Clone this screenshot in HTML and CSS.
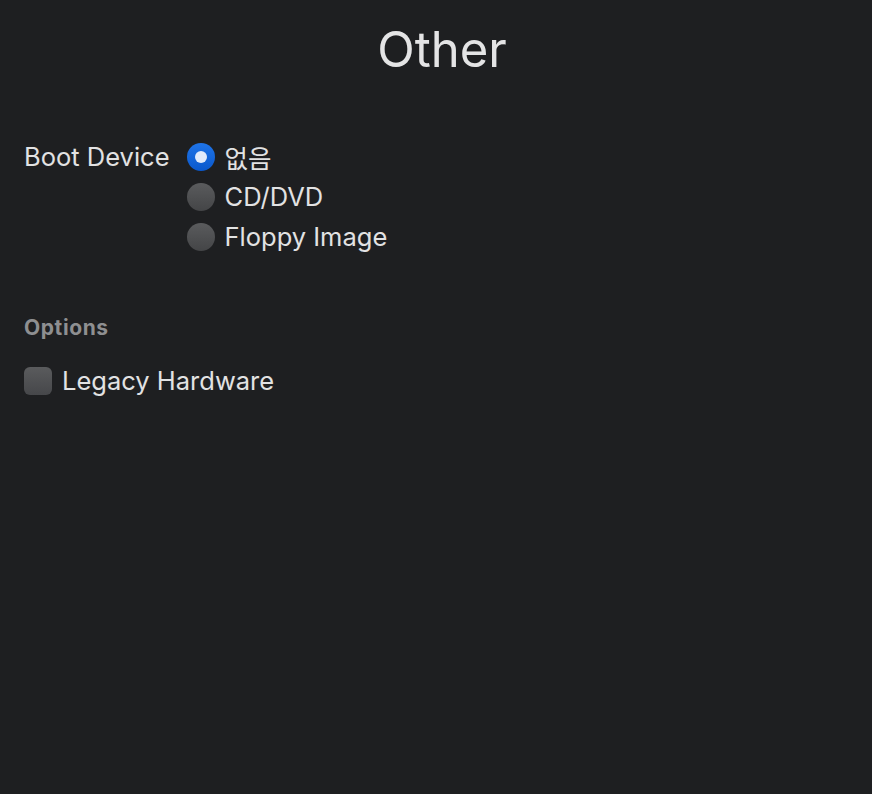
FILE: index.html
```html
<!DOCTYPE html>
<html lang="en">
<head>
<meta charset="utf-8">
<title>Other</title>
<link rel="stylesheet" href="styles.css">
</head>
<body>
<main class="page">
  <h1 class="title">Other</h1>
  <div class="field">
    <div class="field-label">Boot Device</div>
    <div class="radio-group">
      <label class="radio-row"><span class="radio checked"></span><span class="opt-text ko">없음</span></label>
      <label class="radio-row"><span class="radio"></span><span class="opt-text">CD/DVD</span></label>
      <label class="radio-row"><span class="radio"></span><span class="opt-text">Floppy Image</span></label>
    </div>
  </div>
  <h2 class="section">Options</h2>
  <label class="check-row"><span class="checkbox"></span><span class="opt-text">Legacy Hardware</span></label>
</main>
</body>
</html>
```
FILE: styles.css
```css
html, body {
  margin: 0;
  padding: 0;
  background: #1e1f21;
  height: 100%;
}
body {
  font-family: Inter, "Noto Sans CJK KR", sans-serif;
  color: #e2e2e3;
}
.page {
  padding: 0 24px;
}
.title {
  margin: 0;
  padding-top: 20px;
  text-align: center;
  font-size: 49px;
  line-height: 60px;
  font-weight: 400;
  color: #e4e4e5;
  padding-left: 12px;
}
.field {
  display: flex;
  gap: 17px;
  margin-top: 63px;
}
.field-label {
  font-size: 25.5px;
  line-height: 28px;
  color: #e2e2e3;
}
.radio-group {
  display: flex;
  flex-direction: column;
  gap: 12px;
}
.radio-row, .check-row {
  display: flex;
  align-items: center;
  gap: 10px;
  font-size: 25.5px;
  line-height: 28px;
}
.radio {
  width: 28px;
  height: 28px;
  border-radius: 50%;
  background: linear-gradient(#5a5b5d, #444547);
  box-sizing: border-box;
  position: relative;
  flex: none;
}
.radio.checked {
  background: linear-gradient(#1f74e8, #0a58cc);
}
.radio.checked::after {
  content: "";
  position: absolute;
  left: 8px;
  top: 8px;
  width: 12px;
  height: 12px;
  border-radius: 50%;
  background: #e2ebfb;
}
.ko {
  font-family: "Noto Sans CJK KR", Inter, sans-serif;
}
.section {
  margin: 65px 0 0;
  font-size: 21px;
  line-height: 24px;
  font-weight: 700;
  letter-spacing: 0.6px;
  color: #8e8f91;
}
.check-row {
  margin-top: 27px;
  gap: 10px;
}
.checkbox {
  width: 28px;
  height: 28px;
  border-radius: 6px;
  background: linear-gradient(#5a5b5d, #46474a);
  flex: none;
}
```
